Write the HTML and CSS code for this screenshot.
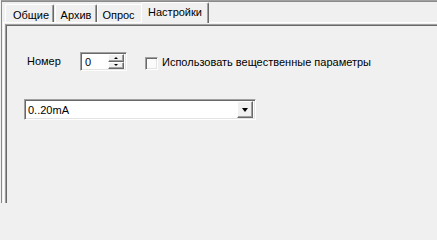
FILE: index.html
```html
<!DOCTYPE html>
<html>
<head>
<meta charset="utf-8">
<link rel="stylesheet" href="styles.css">
</head>
<body>
<div class="frame">
  <div class="tabs">
    <div class="tab t1">Общие</div>
    <div class="tab t2">Архив</div>
    <div class="tab t3">Опрос</div>
    <div class="tab sel">Настройки</div>
  </div>
  <div class="page">
    <div class="panel">
      <div class="row1">
        <span class="lbl">Номер</span>
        <div class="spin">
          <span class="val">0</span>
          <div class="btns">
            <div class="sbtn"><span class="up"></span></div>
            <div class="sbtn"><span class="dn"></span></div>
          </div>
        </div>
        <span class="chk"></span>
        <span class="chklbl">Использовать вещественные параметры</span>
      </div>
      <div class="combo">
        <span class="cval">0..20mA</span>
        <div class="cbtn"><span class="dn big"></span></div>
      </div>
    </div>
  </div>
</div>
</body>
</html>
```

FILE: styles.css
```css
html, body {
  margin: 0;
  padding: 0;
  background: #f0f0f0;
  width: 437px;
  height: 203px;
  overflow: hidden;
  font-family: "Liberation Sans", Arial, sans-serif;
  font-size: 11px;
  color: #000;
}
.frame {
  margin-left: 1px;
  height: 203px;
  border-left: 1px solid #8a8a8a;
  border-top: 1px solid #a0a0a0;
  box-shadow: inset 0 1px 0 #8a8a8a;
  box-sizing: border-box;
  display: flex;
  flex-direction: column;
}
.tabs {
  display: flex;
  align-items: flex-end;
  height: 21px;
  flex: none;
  padding-left: 3px;
  position: relative;
  z-index: 2;
}
.tab {
  box-sizing: border-box;
  height: 18px;
  border-top: 1px solid #fff;
  border-left: 1px solid #fff;
  border-right: 1px solid #696969;
  box-shadow: inset -1px 0 0 #a0a0a0;
  border-top-left-radius: 2px;
  border-top-right-radius: 2px;
  display: flex;
  align-items: center;
  justify-content: center;
  padding-top: 2px;
  background: #f0f0f0;
}
.t1 { width: 49px; margin-right: 1px; padding-left: 3px; }
.t2 { width: 42px; }
.t3 { width: 46px; border-right: none; box-shadow: none; padding-right: 4px; }
.sel {
  width: 68px;
  height: 21px;
  margin-left: -2px;
  margin-bottom: -1px;
  padding-top: 0;
  padding-bottom: 2px;
}
.page {
  flex: 1;
  margin-left: 1px;
  border-top: 1px solid #fff;
  border-left: 1px solid #fff;
  padding: 1px 0 0 1px;
  box-sizing: border-box;
  display: flex;
  flex-direction: column;
}
.panel {
  flex: 1;
  border-top: 1px solid #a0a0a0;
  border-left: 1px solid #a0a0a0;
  box-shadow: inset 1px 1px 0 #696969;
  padding: 27px 0 0 18px;
  box-sizing: border-box;
}
.row1 {
  display: flex;
  align-items: center;
  height: 19px;
}
.lbl {
  width: 56px;
  padding-left: 3px;
  box-sizing: border-box;
  margin-top: -2px;
}
.spin, .combo {
  box-sizing: border-box;
  background: #fff;
  border-top: 1px solid #a0a0a0;
  border-left: 1px solid #a0a0a0;
  border-right: 1px solid #fff;
  border-bottom: 1px solid #fff;
  box-shadow: inset 1px 1px 0 #696969, inset -1px -1px 0 #e3e3e3;
  display: flex;
  align-items: center;
}
.spin {
  width: 47px;
  height: 19px;
  padding: 2px 2px 2px 4px;
}
.val { flex: 1; }
.btns {
  width: 16px;
  height: 15px;
  display: flex;
  flex-direction: column;
}
.sbtn, .cbtn {
  box-sizing: border-box;
  background: #f0f0f0;
  border-top: 1px solid #fff;
  border-left: 1px solid #fff;
  border-right: 1px solid #696969;
  border-bottom: 1px solid #696969;
  box-shadow: inset -1px -1px 0 #a0a0a0;
  display: flex;
  align-items: center;
  justify-content: center;
}
.sbtn { flex: 1; }
.up, .dn {
  width: 0;
  height: 0;
  border-left: 2px solid transparent;
  border-right: 2px solid transparent;
}
.up { border-bottom: 2px solid #000; }
.dn { border-top: 2px solid #000; }
.dn.big {
  border-left-width: 3px;
  border-right-width: 3px;
  border-top-width: 4px;
}
.chk {
  width: 13px;
  height: 13px;
  box-sizing: border-box;
  margin-left: 18px;
  margin-top: 3px;
  background: #fbfbfb;
  border-top: 1px solid #a0a0a0;
  border-left: 1px solid #a0a0a0;
  border-right: 1px solid #fff;
  border-bottom: 1px solid #fff;
  box-shadow: inset 1px 1px 0 #696969, inset -1px -1px 0 #e3e3e3;
}
.chklbl {
  margin-left: 4px;
  margin-top: 1px;
}
.combo {
  margin-top: 28px;
  width: 232px;
  height: 21px;
  padding: 2px 2px 2px 3px;
}
.cval { flex: 1; }
.cbtn {
  width: 16px;
  height: 17px;
  padding-top: 1px;
}
```
